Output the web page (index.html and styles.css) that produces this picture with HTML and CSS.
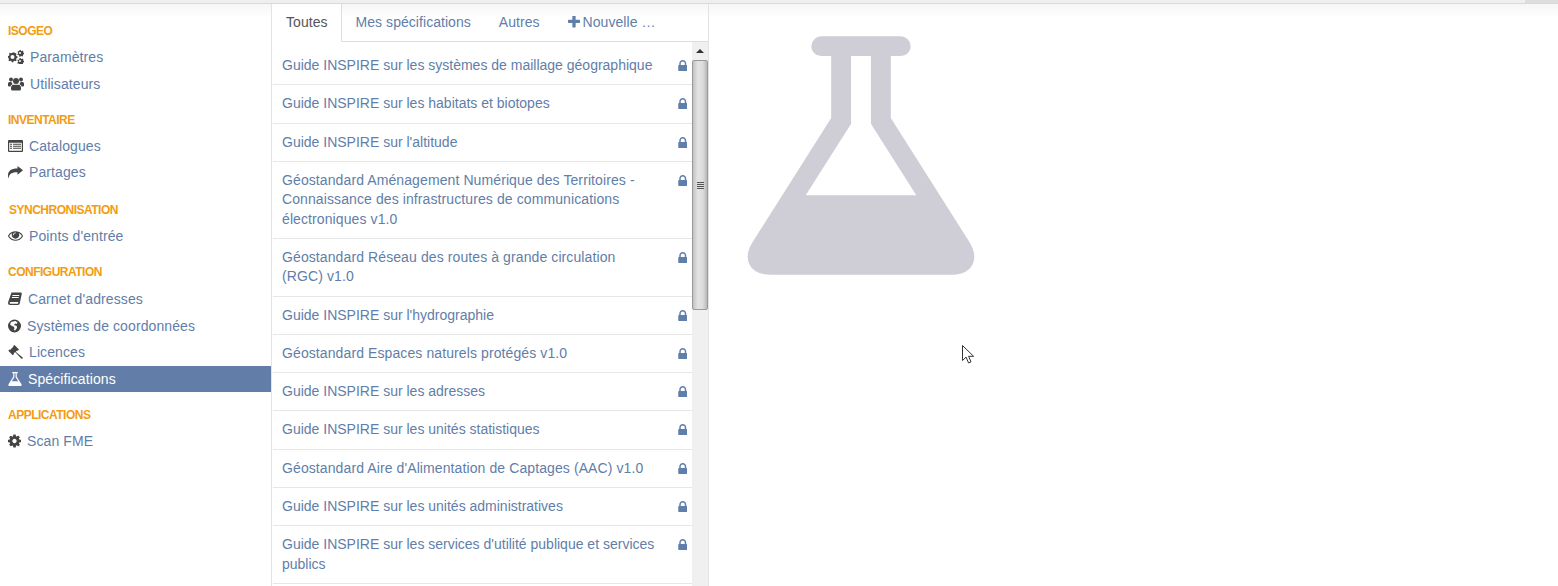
FILE: index.html
```html
<!DOCTYPE html>
<html lang="fr">
  <head>
    <meta charset="UTF-8" />
    <title>Spécifications</title>
    <link rel="stylesheet" href="styles.css">
  </head>

  <body>
    <svg class="defs" aria-hidden="true">
      <symbol id="i-lock" viewBox="0 128 1152 1408"><path d="M320 768h512v-192q0-106-75-181t-181-75-181 75-75 181v192zm832 96v576q0 40-28 68t-68 28h-960q-40 0-68-28t-28-68v-576q0-40 28-68t68-28h32v-192q0-184 132-316t316-132 316 132 132 316v192h32q40 0 68 28t28 68z"/></symbol>
      <symbol id="i-flask" viewBox="162 128 1468 1536"><path d="M1591 1448q56 89 21.500 152.500t-140.500 63.500h-1152q-106 0-140.500-63.500t21.500-152.500l503-793v-399h-64q-26 0-45-19t-19-45 19-45 45-19h512q26 0 45 19t19 45-19 45-45 19h-64v399zm-779-725l-272 429h712l-272-429-20-31v-436h-128v436z"/></symbol>
      <symbol id="i-cog" viewBox="128 128 1536 1536"><path d="M1152 896q0-106-75-181t-181-75-181 75-75 181 75 181 181 75 181-75 75-181zm512-109v222q0 12-8 23t-20 13l-185 28q-19 54-39 91 35 50 107 138 10 12 10 25t-9 23q-27 37-99 108t-94 71q-12 0-26-9l-138-108q-44 23-91 38-16 136-29 186-7 28-36 28h-222q-14 0-24.500-8.500t-11.500-21.500l-28-184q-49-16-90-37l-141 107q-10 9-25 9-14 0-25-11-126-114-165-168-7-10-7-23 0-12 8-23 15-21 51-66.500t54-70.500q-27-50-41-99l-183-27q-13-2-21-12.500t-8-23.500v-222q0-12 8-23t19-13l186-28q14-46 39-92-40-57-107-138-10-12-10-24 0-10 9-23 26-36 98.500-107.500t94.500-71.500q13 0 26 10l138 107q44-23 91-38 16-136 29-186 7-28 36-28h222q14 0 24.500 8.500t11.500 21.500l28 184q49 16 90 37l142-107q9-9 24-9 13 0 25 10 129 119 165 170 7 8 7 22 0 12-8 23-15 21-51 66.500t-54 70.500q26 50 41 98l183 28q13 2 21 12.500t8 23.500z"/></symbol>
      <symbol id="i-eye" viewBox="0 320 1792 1152"><path d="M1664 960q-152-236-381-353 61 104 61 225 0 185-131.500 316.500t-316.500 131.500-316.500-131.500-131.500-316.500q0-121 61-225-229 117-381 353 133 205 333.500 326.500t434.500 121.500 434.500-121.500 333.500-326.500zm-720-384q0-20-14-34t-34-14q-125 0-214.500 89.500t-89.500 214.500q0 20 14 34t34 14 34-14 14-34q0-86 61-147t147-61q20 0 34-14t14-34zm848 384q0 34-20 69-140 230-376.500 368.500t-499.500 138.500-499.500-139-376.500-368q-20-35-20-69t20-69q140-229 376.500-368t499.500-139 499.500 139 376.500 368q20 35 20 69z" transform="translate(0 -64)"/></symbol>
      <symbol id="i-plus" viewBox="192 192 1408 1408"><path d="M1600 736v192q0 40-28 68t-68 28h-416v416q0 40-28 68t-68 28h-192q-40 0-68-28t-28-68v-416h-416q-40 0-68-28t-28-68v-192q0-40 28-68t68-28h416v-416q0-40 28-68t68-28h192q40 0 68 28t28 68v416h416q40 0 68 28t28 68z"/></symbol>
      <symbol id="i-cogs" viewBox="0 0 16 14">
        <path fill-rule="evenodd" d="M5 2.600l1.300-.4.5 1 1.100-.1.700 1.100-.7.900.5 1 1.100.3v1.500l-1.100.4-.3 1 .6 1-1 1-1-.6-1 .4-.4 1.100H3.700l-.3-1.100-1-.4-1 .6-1-1 .6-1-.4-1L0 7.500V6l1.100-.3.400-1-.6-1 1-1 1 .6 1-.4zM4.500 5a2 2 0 1 0 0 4 2 2 0 0 0 0-4z"/>
        <path fill-rule="evenodd" d="M12.600 0l.5.900.9.100.4-.4 1 .7-.3.800.4.700.5.200v1.200l-.8.200-.4.700.3.800-1 .6-.6-.5-.8.100-.5.800-1.100-.4.100-.9-.6-.6-.9.100-.3-1.100.8-.5V2.800l-.7-.5.400-1.100.9.100.6-.5-.1-.9zm-.6 2a1 1 0 1 0 0 2 1 1 0 0 0 0-2zM12.600 8l.5.900.9.100.4-.4 1 .7-.3.800.4.700.5.200v1.200l-.8.200-.4.700.3.800-1 .3-.6-.2-.8.100-.3.600h-.8l-.4-.8-.6-.3-.9.100-.3-1.100.8-.5v-.9l-.7-.5.400-1.100.9.100.6-.5-.1-.9zm-.6 2a1 1 0 1 0 0 2 1 1 0 0 0 0-2z"/>
      </symbol>
      <symbol id="i-users" viewBox="0 0 16 14">
        <circle cx="8" cy="4" r="3"/><circle cx="3" cy="2.500" r="2"/><circle cx="13" cy="2.500" r="2"/>
        <path d="M0 6.500q0-1.500 1.500-1.500h2q.3 1.500 1.200 2.300Q2.800 7.800 2.400 9.500H1q-1 0-1-1zM16 6.500q0-1.500-1.500-1.500h-2q-.3 1.500-1.200 2.300 1.900.5 2.300 2.200H15q1 0 1-1zM5 7.800h6q2 .3 2 3V12q0 1.500-1.500 1.500h-7Q3 13.500 3 12v-1.200q0-2.700 2-3z"/>
      </symbol>
      <symbol id="i-list" viewBox="0 0 15 12">
        <path fill-rule="evenodd" d="M1 0h13q1 0 1 1v10q0 1-1 1H1q-1 0-1-1V1q0-1 1-1zm.2 2.800v8h12.600v-8zM2 3.800h2v1H2zM5 3.800h8v1H5zM2 5.800h2v1H2zM5 5.800h8v1H5zM2 7.800h2v1H2zM5 7.800h8v1H5z"/>
      </symbol>
      <symbol id="i-share" viewBox="0 0 15 12">
        <path d="M15 4.300 9.500 0v2.600C3 2.600 0 5 0 9.500c0 1 .2 1.700.5 2.500.3.100.4-.1.400-.3C1 8 4 6.300 9.500 6.300v2.500z"/>
      </symbol>
      <symbol id="i-book" viewBox="0 0 14 13">
        <path fill-rule="evenodd" d="M3.500 0H13q1 .2.800 1.300l-2 9.500q-.3 1.700-1.800 1.700H2Q0 12.500 0 10.500q0-.5.200-1zM4.500 2.500l-.2 1h6.800l.2-1zM4 4.500l-.2 1h6.800l.2-1zM2.600 9.500q-1 0-1 .8t1 .9h7.300l.4-1.700z"/>
      </symbol>
      <symbol id="i-globe" viewBox="0 0 13 13">
        <path fill-rule="evenodd" d="M6.500 0a6.500 6.500 0 1 1 0 13 6.500 6.500 0 0 1 0-13zM3 2.500 2 5l2 1.500 1.500.5 1 1.500-.7 2 1.200.5 2-2.500-.2-2L6 5.500 7 4l1.500.5L9.500 3 7.500 1.500 5 2z"/>
      </symbol>
      <symbol id="i-gavel" viewBox="0 0 15 14">
        <path d="M6.500 0 11 4.500 9.800 5.700 9 5.500 7.800 6.800l1 .9 5.600 4.500q.7.700.1 1.300-.6.700-1.300 0L8 8l-.9-1-1.300 1.300.2.800L4.800 10.300.3 5.800 1.500 4.600l.8.2 3-3-.1-.7z"/>
      </symbol>
    </svg>

    <div class="topbar">
      <div class="topbar-main"></div>
      <div class="topbar-end"></div>
    </div>

    <div class="app">
      <nav class="sidebar">
        <div class="nav-section">
          <h4 class="nav-title">ISOGEO</h4>
          <a class="nav-item"><svg class="ico w16"><use href="#i-cogs"/></svg>Paramètres</a>
          <a class="nav-item"><svg class="ico w16"><use href="#i-users"/></svg>Utilisateurs</a>
        </div>
        <div class="nav-section inventory">
          <h4 class="nav-title">INVENTAIRE</h4>
          <a class="nav-item"><svg class="ico w15"><use href="#i-list"/></svg>Catalogues</a>
          <a class="nav-item"><svg class="ico w15"><use href="#i-share"/></svg>Partages</a>
        </div>
        <div class="nav-section sync">
          <h4 class="nav-title">SYNCHRONISATION</h4>
          <a class="nav-item"><svg class="ico w15"><use href="#i-eye"/></svg>Points d'entrée</a>
        </div>
        <div class="nav-section config">
          <h4 class="nav-title">CONFIGURATION</h4>
          <a class="nav-item"><svg class="ico w14"><use href="#i-book"/></svg>Carnet d'adresses</a>
          <a class="nav-item"><svg class="ico w13"><use href="#i-globe"/></svg>Systèmes de coordonnées</a>
          <a class="nav-item"><svg class="ico w15"><use href="#i-gavel"/></svg>Licences</a>
          <a class="nav-item active"><svg class="ico w14"><use href="#i-flask"/></svg>Spécifications</a>
        </div>
        <div class="nav-section">
          <h4 class="nav-title">APPLICATIONS</h4>
          <a class="nav-item"><svg class="ico w13"><use href="#i-cog"/></svg>Scan FME</a>
        </div>
      </nav>

      <section class="specs">
        <ul class="tabs">
          <li class="tab active">Toutes</li>
          <li class="tab">Mes spécifications</li>
          <li class="tab">Autres</li>
          <li class="tab"><svg class="plus"><use href="#i-plus"/></svg>Nouvelle …</li>
        </ul>
        <div class="list-wrap">
          <ul class="spec-list">
            <li class="spec"><span class="spec-name">Guide INSPIRE sur les systèmes de maillage géographique</span><svg class="lock"><use href="#i-lock"/></svg></li>
            <li class="spec"><span class="spec-name">Guide INSPIRE sur les habitats et biotopes</span><svg class="lock"><use href="#i-lock"/></svg></li>
            <li class="spec"><span class="spec-name">Guide INSPIRE sur l'altitude</span><svg class="lock"><use href="#i-lock"/></svg></li>
            <li class="spec"><span class="spec-name geo">Géostandard Aménagement Numérique des Territoires - Connaissance des infrastructures de communications électroniques v1.0</span><svg class="lock"><use href="#i-lock"/></svg></li>
            <li class="spec"><span class="spec-name geo">Géostandard Réseau des routes à grande circulation (RGC) v1.0</span><svg class="lock"><use href="#i-lock"/></svg></li>
            <li class="spec"><span class="spec-name">Guide INSPIRE sur l'hydrographie</span><svg class="lock"><use href="#i-lock"/></svg></li>
            <li class="spec"><span class="spec-name geo">Géostandard Espaces naturels protégés v1.0</span><svg class="lock"><use href="#i-lock"/></svg></li>
            <li class="spec"><span class="spec-name">Guide INSPIRE sur les adresses</span><svg class="lock"><use href="#i-lock"/></svg></li>
            <li class="spec"><span class="spec-name">Guide INSPIRE sur les unités statistiques</span><svg class="lock"><use href="#i-lock"/></svg></li>
            <li class="spec"><span class="spec-name geo">Géostandard Aire d'Alimentation de Captages (AAC) v1.0</span><svg class="lock"><use href="#i-lock"/></svg></li>
            <li class="spec"><span class="spec-name">Guide INSPIRE sur les unités administratives</span><svg class="lock"><use href="#i-lock"/></svg></li>
            <li class="spec"><span class="spec-name">Guide INSPIRE sur les services d'utilité publique et services publics</span><svg class="lock"><use href="#i-lock"/></svg></li>
          </ul>
          <div class="scrollbar">
            <div class="scroll-up"></div>
            <div class="scroll-thumb"><div class="scroll-grip"></div></div>
          </div>
        </div>
      </section>

      <main class="detail">
        <svg class="big-flask"><use href="#i-flask"/></svg>
      </main>
    </div>

    <!-- pointeur de souris visible sur la capture -->
    <svg class="cursor" viewBox="0 0 13 19">
      <path d="M.5.500v15l3.600-3.400 2.400 5.800 2.500-1-2.400-5.600h5z" fill="#fff" stroke="#333" stroke-width="1"/>
    </svg>
  </body>
</html>
```

FILE: styles.css
```css
html, body {
  margin: 0;
  height: 586px;
  overflow: hidden;
}

body {
  font-family: "Liberation Sans", Arial, sans-serif;
  font-size: 14px;
  color: #5f7ea9;
  background: #fff;
}

.defs {
  display: none;
}

ul {
  list-style: none;
  margin: 0;
  padding: 0;
}

/* barre grise tout en haut */
.topbar {
  display: flex;
  height: 4px;
}

.topbar-main {
  flex: 1;
  background: #efefef;
  border-bottom: 1px solid #d9d9d9;
}

.topbar-end {
  width: 33px;
  background: #dedede;
  border-bottom: 1px solid #d9d9d9;
}

.app {
  display: flex;
  height: 582px;
  background: linear-gradient(#f6f6f6, #fff 14px);
}

.sidebar {
  width: 271px;
  flex: none;
  padding-top: 14px;
  border-right: 1px solid #e3e3e3;
  letter-spacing: 0.1px;
}

.nav-section {
  margin-bottom: 9.4px;
}

.nav-section.inventory {
  margin-top: 9.200px;
}

.nav-section.sync {
  margin-top: 11px;
}

.nav-title {
  margin: 0;
  height: 26px;
  padding-left: 8px;
  line-height: 26px;
  font-size: 12px;
  font-weight: bold;
  letter-spacing: -0.5px;
  color: #f39c12;
}

.sync .nav-title {
  padding-left: 9px;
}

.config .nav-title {
  height: 27px;
  line-height: 26px;
}

.nav-item {
  display: flex;
  align-items: center;
  gap: 6px;
  height: 26.6px;
  padding-left: 8px;
}

.nav-item.active {
  background: #627ea8;
  color: #fff;
}

.ico {
  height: 14px;
  fill: #444;
  flex: none;
}

.active .ico {
  fill: #fff;
}

.w13 { width: 13px; }
.w14 { width: 14px; }
.w15 { width: 15px; }
.w16 { width: 16px; }

.specs {
  width: 436px;
  flex: none;
  border-right: 1px solid #e3e3e3;
}

.tabs {
  display: flex;
  height: 37px;
  border-bottom: 1px solid #dedede;
  letter-spacing: 0.05px;
}

.tab {
  padding: 0 14px;
  line-height: 36px;
  height: 36px;
  white-space: nowrap;
}

.tab.active {
  height: 38px;
  padding-right: 13px;
  background: #fff;
  color: #555;
  border-right: 1px solid #dedede;
}

.plus {
  width: 12px;
  height: 12px;
  margin-right: 3px;
  fill: #5f7ea9;
  vertical-align: -1px;
}

.list-wrap {
  display: flex;
  height: 544px;
  overflow: hidden;
}

.spec-list {
  flex: 1;
  padding: 5px 0 0 1px;
}

.spec {
  display: flex;
  align-items: flex-start;
  justify-content: space-between;
  padding: 8.95px 5px 8.95px 9px;
  line-height: 19.4px;
  border-bottom: 1px solid #e7e7e7;
}

.spec-name {
  width: 376px;
}

.geo {
  letter-spacing: 0.1px;
}

.lock {
  width: 9.500px;
  height: 11px;
  margin-top: 4px;
  fill: #5f7ea9;
  flex: none;
}

.scrollbar {
  width: 16px;
  flex: none;
  background: #f0f0f0;
}

.scroll-up {
  width: 0;
  height: 0;
  margin: 7px auto 7px;
  border: 4px solid transparent;
  border-top: 0;
  border-bottom-color: #333;
}

.scroll-thumb {
  display: flex;
  align-items: center;
  justify-content: center;
  height: 248px;
  width: 14px;
  border: 1px solid #9a9a9a;
  border-radius: 2px;
  background: linear-gradient(to right, #c2c2c2, #e4e4e4 35%, #dcdcdc 70%, #b8b8b8);
}

.scroll-grip {
  width: 7px;
  height: 7px;
  background: repeating-linear-gradient(#555 0, #555 1px, #ddd 1px, #ddd 2px);
}

.detail {
  flex: 1;
  padding: 32px 0 0 38px;
}

.big-flask {
  display: block;
  width: 228px;
  height: 239px;
  fill: #cfced7;
}

.cursor {
  position: absolute;
  left: 962px;
  top: 345px;
  width: 13px;
  height: 19px;
}
```
